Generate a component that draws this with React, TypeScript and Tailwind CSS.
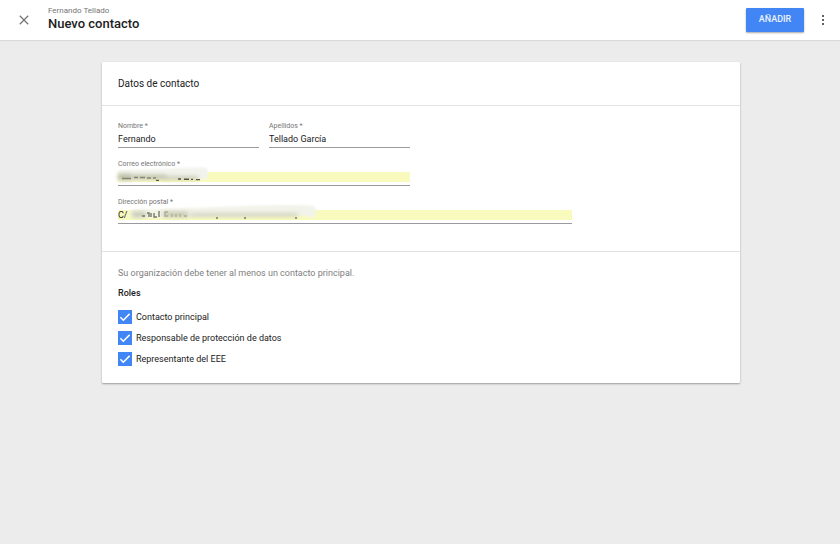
import { useState } from 'react';

interface FieldProps {
  id: string;
  label: string;
  type?: string;
  value: string;
  autofilled?: boolean;
  onChange: (value: string) => void;
  children?: React.ReactNode;
}

function Field({ id, label, type = 'text', value, autofilled, onChange, children }: FieldProps) {
  return (
    <div className="flex flex-col">
      <label htmlFor={id} className="text-[7px] leading-[10px] text-[#757575]">
        {label} *
      </label>
      <div className="relative border-b border-[#9a9a9e] pt-[3px] pb-[3px]">
        <input
          id={id}
          type={type}
          value={value}
          onChange={e => onChange(e.target.value)}
          className={`block h-[10px] w-full text-[9px] leading-[10px] text-[#212121] outline-none ${
            autofilled ? 'bg-[#f9fbbe]' : 'bg-transparent'
          }`}
        />
        {children}
      </div>
    </div>
  );
}

function EmailMask() {
  return (
    <svg className="pointer-events-none absolute -top-[3px] -left-1" width="98" height="20" aria-hidden="true">
      <defs>
        <filter id="soft" filterUnits="userSpaceOnUse" x="0" y="0" width="196" height="20">
          <feGaussianBlur stdDeviation="0.8" />
        </filter>
        <filter id="smear" filterUnits="userSpaceOnUse" x="0" y="0" width="196" height="20">
          <feGaussianBlur stdDeviation="2" />
        </filter>
        <filter id="faint" filterUnits="userSpaceOnUse" x="0" y="0" width="196" height="20">
          <feGaussianBlur stdDeviation="0.7" />
        </filter>
      </defs>
      <path d="M6 4 L48 3 Q90 0 93 2 Q96 12 90 14 L86 13 L50 13 L8 15 Q3 14 4 7Z" fill="#f3f3ee" filter="url(#soft)" />
      <path d="M4 8 H18 V14 H4Z M19 9 H52 V13 H19Z" fill="#b9bb9f" filter="url(#smear)" />
      <path d="M50 12 H84" stroke="#bfc1a8" strokeWidth="3" filter="url(#smear)" />
      <path d="M8 12.5h9M20 11.5h4M26 11.5h5M33 12h4M39 12h3" stroke="#85876d" strokeWidth="1.4" filter="url(#faint)" />
      <path d="M42 14.4h3M64 13h3M70 13.2h5M77 13.4h2M82 13.6h4" stroke="#55564a" strokeWidth="1.4" filter="url(#faint)" />
    </svg>
  );
}

function AddressMask() {
  return (
    <svg className="pointer-events-none absolute -top-[3px] left-2" width="196" height="20" aria-hidden="true">
      <path d="M6 6 L90 3 Q186 -1 189 3 Q192 12 186 14 L180 12 L80 13 L8 14 Q2 12 6 6Z" fill="#f2f3ea" filter="url(#soft)" />
      <path d="M6 8 H20 V13 H6Z" fill="#c5c7b2" filter="url(#smear)" />
      <path d="M16 12h3M21 9h2v4M25 9v4M28 9v4h3M33 7v6" fill="none" stroke="#777963" strokeWidth="1.4" filter="url(#faint)" />
      <path d="M37 8 H62 V13 H37Z" fill="#c3c5aa" filter="url(#smear)" />
      <path d="M42 8h-3v4h3M46 10v3M50 10v3M54 10v3M58 12h3" fill="none" stroke="#aaad93" strokeWidth="1.3" filter="url(#faint)" />
      <path d="M64 11 H172" stroke="#c9ccb2" strokeWidth="3" filter="url(#smear)" />
      <path d="M90 14h2M118 14h2M169 14h2" stroke="#77796a" strokeWidth="1.4" filter="url(#faint)" />
    </svg>
  );
}

interface RoleProps {
  label: string;
  checked: boolean;
  onToggle: () => void;
}

function RoleCheckbox({ label, checked, onToggle }: RoleProps) {
  return (
    <label className="flex items-center gap-1 text-[9px] leading-[14px] text-[#212121]">
      <span className="grid">
        <input
          type="checkbox"
          checked={checked}
          onChange={onToggle}
          className="col-start-1 row-start-1 size-[14px] appearance-none border border-[#757575] bg-white checked:border-[#4285f4] checked:bg-[#4285f4]"
        />
        {checked && (
          <svg viewBox="0 0 14 14" className="pointer-events-none col-start-1 row-start-1 size-[14px]" aria-hidden="true">
            <path d="M2.4 7.2 5.3 10.2 11.6 3.9" fill="none" stroke="#fff" strokeWidth="1.5" />
          </svg>
        )}
      </span>
      {label}
    </label>
  );
}

const roleOptions = ['Contacto principal', 'Responsable de protección de datos', 'Representante del EEE'];

export default function App() {
  const [form, setForm] = useState({ name: 'Fernando', surname: 'Tellado García', email: '', address: 'C/' });
  const [roles, setRoles] = useState<string[]>(roleOptions);

  const update = (key: keyof typeof form) => (value: string) => setForm({ ...form, [key]: value });

  const toggleRole = (role: string) =>
    setRoles(roles.includes(role) ? roles.filter(r => r !== role) : [...roles, role]);

  return (
    <div className="min-h-screen bg-[#ececec] font-[Roboto,sans-serif] text-[#212121]">
      <header className="flex h-10 items-center bg-white pr-[15px] pl-[19px] shadow-[0_1px_1px_rgba(0,0,0,0.08)]">
        <button type="button" aria-label="Cerrar" className="text-[#757575]">
          <svg viewBox="0 0 10 10" className="size-[10px]" aria-hidden="true">
            <path d="M0.8 0.8 9.2 9.2M9.2 0.8 0.8 9.2" fill="none" stroke="currentColor" strokeWidth="1.3" />
          </svg>
        </button>
        <div className="ml-[19px] flex-1 pb-[2px]">
          <p className="text-[8px] leading-[10px] text-[#757575]">Fernando Tellado</p>
          <h1 className="text-[13px] leading-4 font-medium">Nuevo contacto</h1>
        </div>
        <button
          type="submit"
          form="contact-form"
          className="h-6 w-[58px] rounded-[1px] bg-[#4285f4] text-[9px] font-medium text-white/90 shadow-[0_1px_2px_rgba(0,0,0,0.35)]"
        >
          AÑADIR
        </button>
        <button type="button" aria-label="Más opciones" className="ml-[17px] text-[#616161]">
          <svg viewBox="0 0 4 12" className="h-3 w-1" aria-hidden="true">
            <path d="M1 1h2v2H1zM1 5h2v2H1zM1 9h2v2H1z" fill="currentColor" />
          </svg>
        </button>
      </header>

      <main className="pt-[22px] pr-[100px] pb-8 pl-[102px]">
        <form
          id="contact-form"
          onSubmit={e => e.preventDefault()}
          className="rounded-[1px] bg-white shadow-[0_1px_2px_rgba(0,0,0,0.35)]"
        >
          <h2 className="border-b border-[#e2e2e2] px-4 pt-[14px] pb-[13px] text-[10px] leading-4">Datos de contacto</h2>

          <div className="flex flex-col gap-[11px] border-b border-[#e2e2e2] px-4 pt-[15px] pb-[27px]">
            <div className="grid max-w-[292px] grid-cols-2 gap-[10px]">
              <Field id="name" label="Nombre" value={form.name} onChange={update('name')} />
              <Field id="surname" label="Apellidos" value={form.surname} onChange={update('surname')} />
            </div>
            <div className="max-w-[292px]">
              <Field id="email" label="Correo electrónico" type="email" value={form.email} autofilled onChange={update('email')}>
                <EmailMask />
              </Field>
            </div>
            <div className="max-w-[454px]">
              <Field id="address" label="Dirección postal" value={form.address} autofilled onChange={update('address')}>
                <AddressMask />
              </Field>
            </div>
          </div>

          <div className="px-4 pt-[14px] pb-[17px]">
            <p className="text-[9px] leading-[14px] text-[#808080]">
              Su organización debe tener al menos un contacto principal.
            </p>
            <fieldset className="mt-[6px]">
              <legend className="text-[9px] leading-[14px] font-medium">Roles</legend>
              <div className="mt-[10px] flex flex-col gap-[7px]">
                {roleOptions.map(role => (
                  <RoleCheckbox key={role} label={role} checked={roles.includes(role)} onToggle={() => toggleRole(role)} />
                ))}
              </div>
            </fieldset>
          </div>
        </form>
      </main>
    </div>
  );
}
